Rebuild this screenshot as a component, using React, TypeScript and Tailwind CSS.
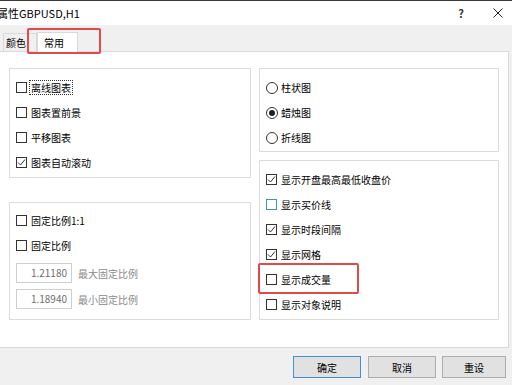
import React from 'react';

const font = { fontFamily: '"Noto Sans CJK SC", "Noto Sans", sans-serif' };

function CheckBox({ checked, hover }: { checked?: boolean; hover?: boolean }) {
  return (
    <span
      className={`w-[11px] h-[11px] shrink-0 bg-white border flex items-center justify-center ${
        hover ? 'border-[#3c8fd8]' : 'border-[#333333]'
      }`}
    >
      {checked && (
        <svg width="9" height="9" viewBox="0 0 9 9" fill="none">
          <path d="M1 4.5 L3.5 7 L8 1.5" stroke="#333" strokeWidth="1" />
        </svg>
      )}
    </span>
  );
}

function CheckRow({
  label,
  checked,
  hover,
  focus,
}: {
  label: string;
  checked?: boolean;
  hover?: boolean;
  focus?: boolean;
}) {
  return (
    <div className="h-[25px] flex items-center">
      <CheckBox checked={checked} hover={hover} />
      <span
        className={`ml-[2px] px-px leading-[13px] ${
          focus ? 'border border-dotted border-[#333]' : 'border border-transparent'
        }`}
      >
        {label}
      </span>
    </div>
  );
}

function RadioRow({ label, checked }: { label: string; checked?: boolean }) {
  return (
    <div className="h-[25px] flex items-center">
      <span className="w-[12px] h-[12px] rounded-full border border-[#333] bg-white flex items-center justify-center shrink-0">
        {checked && <span className="w-[6px] h-[6px] rounded-full bg-[#222]" />}
      </span>
      <span className="ml-[3px]">{label}</span>
    </div>
  );
}

function Group({ className, children }: { className?: string; children: React.ReactNode }) {
  return <div className={`border border-[#dcdcdc] pl-[6px] ${className ?? ''}`}>{children}</div>;
}

function ScaleInput({ value, label }: { value: string; label: string }) {
  return (
    <div className="flex items-center">
      <div className="w-[56px] h-[20px] border border-[#cfcfcf] bg-white text-[#6f6f6f] text-right pr-[4px] leading-[18px]">
        {value}
      </div>
      <span className="ml-[6px] text-[#8a8a8a]">{label}</span>
    </div>
  );
}

function Button({ label, primary, className }: { label: string; primary?: boolean; className?: string }) {
  return (
    <div
      className={`h-[22px] bg-[#e1e1e1] border flex items-center justify-center ${
        primary ? 'border-[#3c8fd8]' : 'border-[#adadad]'
      } ${className ?? ''}`}
    >
      {label}
    </div>
  );
}

export default function App() {
  return (
    <div
      className="relative w-[512px] h-[385px] overflow-hidden bg-[#f0f0f0] flex flex-col text-[10px] text-black"
      style={font}
    >
      {/* chart remnant line */}
      <div className="h-px bg-[#3a3a3a]" />

      {/* Title bar */}
      <div className="h-[24px] bg-white flex items-center">
        <span className="ml-[-3px] text-[11px]">属性GBPUSD,H1</span>
        <div className="ml-auto flex items-center">
          <span className="text-[11px] font-bold text-[#333] mr-[29px]">?</span>
          <svg width="10" height="10" viewBox="0 0 10 10" className="mr-[9px]">
            <path d="M0.5 0.5 L9.5 9.5 M9.5 0.5 L0.5 9.5" stroke="#222" strokeWidth="1" />
          </svg>
        </div>
      </div>

      {/* Tabs */}
      <div className="h-[26px] flex items-end pl-[3px]">
        <div className="h-[18px] px-[2px] w-[34px] border border-b-0 border-[#d9d9d9] flex items-center">颜色</div>
        <div className="h-[20px] w-[41px] bg-white border border-b-0 border-[#d9d9d9] flex items-center pl-[6px] mb-[-1px] z-10">
          常用
        </div>
      </div>

      {/* Tab panel */}
      <div className="h-[297px] w-[509px] bg-white border-y border-r border-[#d9d9d9] grid grid-cols-[242px_240px] gap-x-[8px] pl-[9px] pt-[16px]">
        <div className="flex flex-col">
          <Group className="h-[110px] pt-[6px]">
            <CheckRow label="离线图表" focus />
            <CheckRow label="图表置前景" />
            <CheckRow label="平移图表" />
            <CheckRow label="图表自动滚动" checked />
          </Group>
          <Group className="h-[118px] mt-[24px] pt-[5px]">
            <CheckRow label="固定比例1:1" />
            <CheckRow label="固定比例" />
            <div className="flex flex-col gap-[6px] mt-[5px]">
              <ScaleInput value="1.21180" label="最大固定比例" />
              <ScaleInput value="1.18940" label="最小固定比例" />
            </div>
          </Group>
        </div>
        <div className="flex flex-col">
          <Group className="h-[84px] pt-[6px]">
            <RadioRow label="柱状图" />
            <RadioRow label="蜡烛图" checked />
            <RadioRow label="折线图" />
          </Group>
          <Group className="h-[160px] mt-[8px] pt-[6px]">
            <CheckRow label="显示开盘最高最低收盘价" checked />
            <CheckRow label="显示买价线" hover />
            <CheckRow label="显示时段间隔" checked />
            <CheckRow label="显示网格" checked />
            <CheckRow label="显示成交量" />
            <CheckRow label="显示对象说明" />
          </Group>
        </div>
      </div>

      {/* Buttons */}
      <div className="flex justify-end gap-[6px] pt-[8px] pr-[6px]">
        <Button label="确定" primary className="w-[68px]" />
        <Button label="取消" className="w-[68px] ml-px" />
        <Button label="重设" className="w-[64px]" />
      </div>

      {/* annotation boxes */}
      <div className="absolute left-[27px] top-[28px] w-[74px] h-[26px] border-2 border-[#e04a4a] rounded-[2px]" />
      <div className="absolute left-[258px] top-[263px] w-[101px] h-[31px] border-2 border-[#e04a4a] rounded-[2px]" />
    </div>
  );
}
